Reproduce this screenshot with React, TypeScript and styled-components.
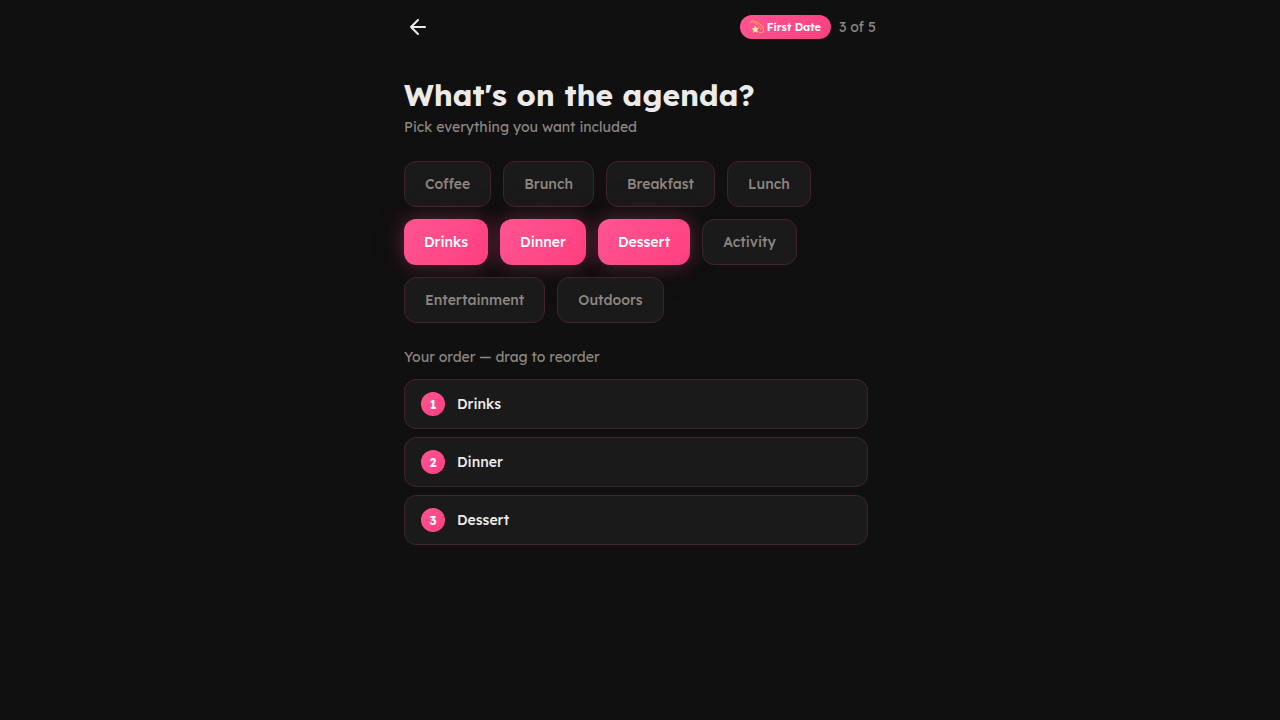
import React, { useState } from "react";
import styled, { createGlobalStyle, css } from "styled-components";

const pink = "linear-gradient(135deg, #ff5592 0%, #ff3f80 100%)";
const line = "#41232f";

const GlobalStyle = createGlobalStyle`
  *, *::before, *::after { box-sizing: border-box; }
  body {
    margin: 0;
    background: #101010;
    color: #ecebea;
    font-family: Lexend, Inter, "Open Sans", sans-serif;
    -webkit-font-smoothing: antialiased;
  }
  button { font: inherit; cursor: pointer; }
`;

const Page = styled.div`
  min-height: 100vh;
  padding-right: 8px;
`;

const Column = styled.div`
  max-width: 480px;
  margin: 0 auto;
`;

const Header = styled.header`
  display: flex;
  align-items: center;
  justify-content: space-between;
  height: 54px;
  padding-left: 2px;
`;

const BackButton = styled.button`
  display: flex;
  align-items: center;
  justify-content: center;
  width: 40px;
  height: 40px;
  padding: 0;
  border: 0;
  background: none;
  color: #ecebea;
`;

const Progress = styled.div`
  display: flex;
  align-items: center;
  gap: 8px;
`;

const Badge = styled.span`
  display: flex;
  align-items: center;
  gap: 3px;
  height: 24px;
  padding: 0 10px;
  border-radius: 12px;
  background: ${pink};
  color: #fff;
  font-size: 11px;
  font-weight: 600;
  line-height: 16px;
`;

const Step = styled.span`
  color: #8c8680;
  font-size: 14px;
  line-height: 20px;
`;

const Main = styled.main`
  padding: 22px 8px 40px;
`;

const Title = styled.h1`
  margin: 0 0 2px;
  font-size: 30px;
  font-weight: 700;
  line-height: 38px;
`;

const Note = styled.p`
  margin: 0;
  color: #8c8680;
  font-size: 14px;
  line-height: 22px;
`;

const Chips = styled.div`
  display: flex;
  flex-wrap: wrap;
  gap: 12px;
  margin: 23px 0;
`;

const Chip = styled.button<{ $selected: boolean }>`
  height: 46px;
  padding: 0 20px;
  border: 1px solid ${line};
  border-radius: 12px;
  background: #1a1a1a;
  color: #8c8680;
  font-size: 14px;
  font-weight: 500;
  line-height: 20px;
  ${(p) =>
    p.$selected &&
    css`
      border: 0;
      background: ${pink};
      color: #fff;
      box-shadow: 0 0 20px rgba(255, 77, 138, 0.3), 0 0 60px rgba(255, 77, 138, 0.05);
    `}
`;

const OrderList = styled.ol`
  display: flex;
  flex-direction: column;
  gap: 8px;
  margin: 11px 0 0;
  padding: 0;
  list-style: none;
`;

const OrderRow = styled.li`
  display: flex;
  align-items: center;
  gap: 12px;
  height: 50px;
  padding: 0 16px;
  border: 1px solid ${line};
  border-radius: 12px;
  background: #1a1a1a;
  font-size: 14px;
  font-weight: 500;
  cursor: grab;
`;

const Rank = styled.span`
  display: grid;
  place-items: center;
  width: 24px;
  height: 24px;
  border-radius: 50%;
  background: ${pink};
  color: #fff;
  font-size: 12px;
  font-weight: 700;
`;

const options = [
  "Coffee", "Brunch", "Breakfast", "Lunch", "Drinks",
  "Dinner", "Dessert", "Activity", "Entertainment", "Outdoors",
];

const BackArrow = () => (
  <svg width="24" height="24" viewBox="0 0 24 24" fill="none" stroke="currentColor" strokeWidth="2" strokeLinecap="round" strokeLinejoin="round" aria-hidden="true">
    <path d="M19 12H5M12 19l-7-7 7-7" />
  </svg>
);

const DizzyStar = () => (
  <svg width="14" height="14" viewBox="0 0 14 14" fill="none" aria-hidden="true">
    <path d="M.7 3C.8.600 4.500.500 8.300 3 12 5.500 14 9 13.200 11.200 12.600 12.700 11 13 9.300 12.600" stroke="#fba24e" strokeWidth="1.100" strokeLinecap="round" />
    <path d="M3 2.700C5.800 2.900 9.500 5.600 10.700 9" stroke="#fba24e" strokeWidth=".8" strokeLinecap="round" />
    <path d="M5.300 5.800l.9 2.100 2.400.3-1.600 1.600.6 2.500-2.300-.9-2 1 .3-2.300-1.800-1.500 2.300-.5z" fill="#fff0b8" stroke="#fdd074" strokeWidth=".5" strokeLinejoin="round" />
  </svg>
);

export default function App() {
  const [order, setOrder] = useState(["Drinks", "Dinner", "Dessert"]);
  const toggle = (name: string) =>
    setOrder((cur) => (cur.includes(name) ? cur.filter((n) => n !== name) : [...cur, name]));

  return (
    <>
      <GlobalStyle />
      <Page>
        <Column>
          <Header>
            <BackButton type="button" aria-label="Back">
              <BackArrow />
            </BackButton>
            <Progress>
              <Badge>
                <DizzyStar />
                First Date
              </Badge>
              <Step>3 of 5</Step>
            </Progress>
          </Header>
          <Main>
            <Title>What's on the agenda?</Title>
            <Note>Pick everything you want included</Note>
            <Chips>
              {options.map((name) => (
                <Chip
                  key={name}
                  type="button"
                  $selected={order.includes(name)}
                  aria-pressed={order.includes(name)}
                  onClick={() => toggle(name)}
                >
                  {name}
                </Chip>
              ))}
            </Chips>
            <Note>Your order — drag to reorder</Note>
            <OrderList>
              {order.map((name, i) => (
                <OrderRow key={name} draggable>
                  <Rank>{i + 1}</Rank>
                  {name}
                </OrderRow>
              ))}
            </OrderList>
          </Main>
        </Column>
      </Page>
    </>
  );
}
